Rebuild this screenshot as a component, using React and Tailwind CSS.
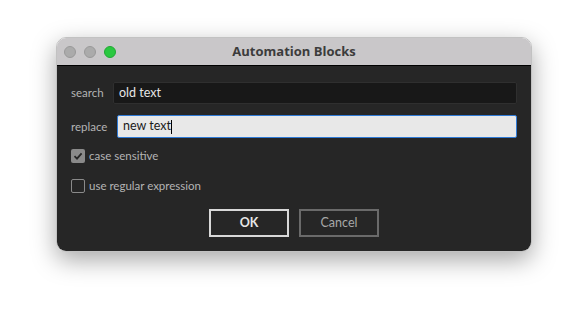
export default function App() {
  const font = { fontFamily: 'Lato, "Noto Sans", sans-serif' };
  const titleFont = { fontFamily: '"Open Sans", "Noto Sans", sans-serif' };

  return (
    <div className="min-h-[326px] w-[588px] bg-white pl-[56px] pt-[37px]" style={font}>
      <div className="w-[476px] rounded-[10px] overflow-hidden shadow-[0_8px_24px_rgba(0,0,0,0.35)] border border-[#9a9a9a]/60">
        <div className="relative h-[28px] bg-[#c9c7c9] border-b border-black flex items-center">
          <div className="flex items-center gap-[8px] pl-[7px]">
            <span className="w-[12px] h-[12px] rounded-full bg-[#ababab] border border-[#999]" />
            <span className="w-[12px] h-[12px] rounded-full bg-[#ababab] border border-[#999]" />
            <span className="w-[12px] h-[12px] rounded-full bg-[#2ac840] border border-[#22a834]" />
          </div>
          <div className="absolute inset-0 flex items-center justify-center text-[13px] font-bold text-[#3c3c3c]" style={titleFont}>
            Automation Blocks
          </div>
        </div>
        <div className="bg-[#262626] h-[185px] px-[14px] pt-[16px] flex flex-col">
          <div className="flex items-center">
            <span className="text-[11.5px] text-[#b4b4b4] w-[42px]">search</span>
            <div className="flex-1 h-[22px] bg-[#181818] border border-[#2f2f2f] rounded-[2px] flex items-center px-[5px] text-[12.5px] text-[#e6e6e6]">
              old text
            </div>
          </div>
          <div className="flex items-center mt-[11px]">
            <span className="text-[11.5px] text-[#b4b4b4] w-[46px]">replace</span>
            <div className="flex-1 h-[23px] bg-[#e8e8e8] border border-[#2f7ad6] rounded-[2px] flex items-center px-[5px] text-[12.5px] text-[#1a1a1a]">
              new text<span className="w-px h-[14px] bg-black" />
            </div>
          </div>
          <label className="flex items-center mt-[11px] h-[14px] gap-[4px]">
            <span className="w-[14px] h-[14px] rounded-[2px] bg-[#8a8a8a] flex items-center justify-center">
              <svg width="10" height="10" viewBox="0 0 10 10">
                <path d="M1.5 5.2 L4 7.6 L8.6 2.4" stroke="#262626" strokeWidth="1.8" fill="none" />
              </svg>
            </span>
            <span className="text-[11.5px] text-[#b4b4b4]">case sensitive</span>
          </label>
          <label className="flex items-center mt-[16px] h-[14px] gap-[4px]">
            <span className="w-[14px] h-[14px] rounded-[2px] border border-[#8a8a8a]" />
            <span className="text-[11.5px] text-[#b4b4b4]">use regular expression</span>
          </label>
          <div className="flex justify-center gap-[10px] mt-[16px]">
            <button className="w-[80px] h-[28px] border-2 border-[#d8d8d8] text-[12.5px] font-bold text-[#e6e6e6] bg-[#262626]">
              OK
            </button>
            <button className="w-[80px] h-[28px] border-2 border-[#6a6a6a] text-[12.5px] text-[#a8a8a8] bg-[#262626]">
              Cancel
            </button>
          </div>
        </div>
      </div>
    </div>
  );
}
